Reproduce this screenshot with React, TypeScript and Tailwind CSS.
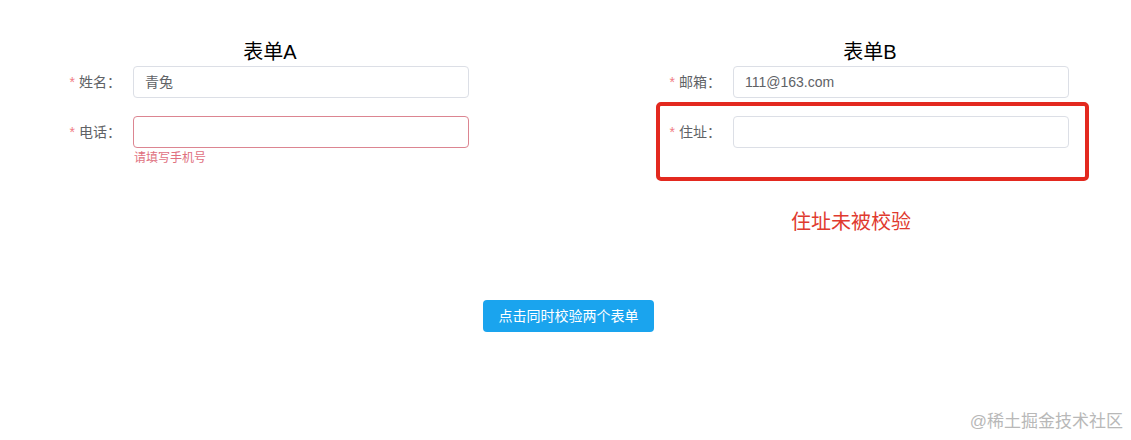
import React from "react";

function Label({ text }: { text: string }) {
  return (
    <div className="w-[80px] shrink-0 pr-[12px] text-right text-[14px] leading-[32px] text-[#606266]">
      <span className="mr-[4px] text-[#f07c84]">*</span>
      {text}
    </div>
  );
}

function Input({ value, error }: { value?: string; error?: boolean }) {
  return (
    <div
      className={
        "flex h-[32px] w-full items-center rounded-[4px] border bg-white px-[11px] text-[14px] text-[#606266] " +
        (error ? "border-[#dc8591]" : "border-[#dcdfe6]")
      }
    >
      {value}
    </div>
  );
}

export default function App() {
  return (
    <div className="relative h-[440px] w-[1131px] overflow-hidden bg-white font-['Liberation_Sans','Noto_Sans_CJK_SC',sans-serif]">
      <div className="flex items-start gap-[140px] pl-[40px] pt-[38px]">
        {/* Form A */}
        <div className="flex w-[460px] flex-col">
          <div className="h-[28px] text-center text-[20px] leading-[28px] text-black">表单A</div>
          <div className="ml-[13px] flex w-[416px] flex-col gap-[18px]">
            <div className="flex">
              <Label text="姓名：" />
              <div className="flex-1">
                <Input value="青兔" />
              </div>
            </div>
            <div className="flex">
              <Label text="电话：" />
              <div className="relative flex-1">
                <Input error />
                <div className="absolute left-[1px] top-full pt-[4px] text-[12px] leading-none text-[#e0707e]">
                  请填写手机号
                </div>
              </div>
            </div>
          </div>
        </div>

        {/* Form B */}
        <div className="flex w-[460px] flex-col">
          <div className="h-[28px] text-center text-[20px] leading-[28px] text-black">表单B</div>
          <div className="ml-[13px] flex w-[416px] flex-col gap-[18px]">
            <div className="flex">
              <Label text="邮箱：" />
              <div className="flex-1">
                <Input value="111@163.com" />
              </div>
            </div>
            <div className="relative flex">
              <Label text="住址：" />
              <div className="flex-1">
                <Input />
              </div>
              <div className="pointer-events-none absolute -bottom-[33px] left-[3px] -right-[20px] -top-[14px] rounded-[5px] border-[4px] border-[#e3291f]" />
            </div>
          </div>
          <div className="mt-[60px] pl-[151px] text-[20px] leading-[28px] text-[#e03a2f]">住址未被校验</div>
        </div>
      </div>

      <div className="mt-[64px] flex pl-[483px]">
        <button className="h-[32px] w-[171px] rounded-[4px] bg-[#1aa4ee] text-[14px] text-white">
          点击同时校验两个表单
        </button>
      </div>

      <div className="absolute right-[8px] top-[410px] text-[17px] leading-[24px] text-[#b8b8b8]">
        @稀土掘金技术社区
      </div>
    </div>
  );
}
